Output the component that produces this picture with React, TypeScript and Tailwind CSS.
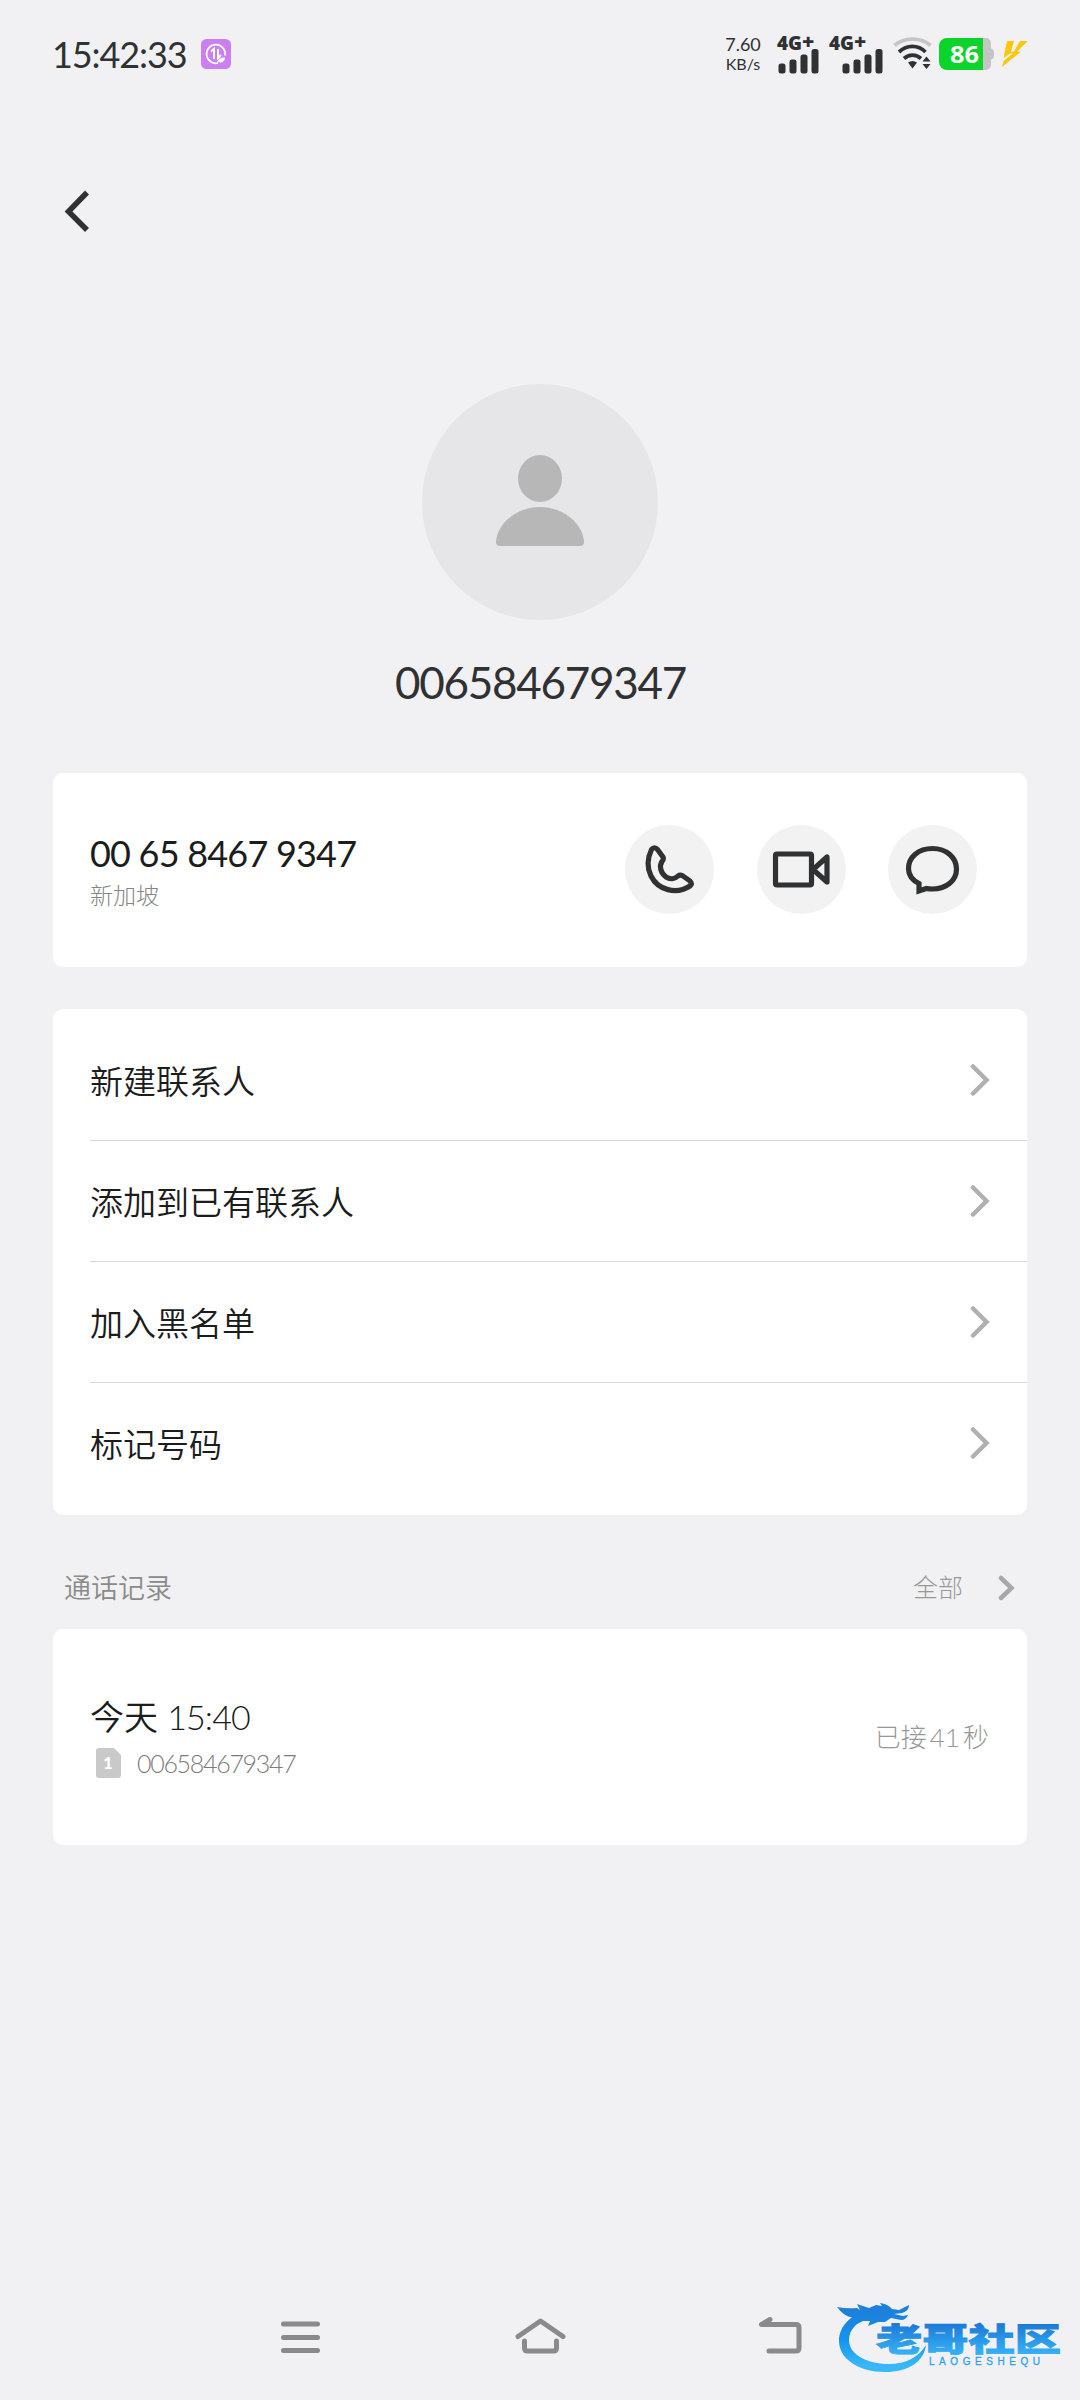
import type { ReactNode } from "react";

const actions = [
  { label: "新建联系人" },
  { label: "添加到已有联系人" },
  { label: "加入黑名单" },
  { label: "标记号码" },
];

function Signal({ offset = 0 }: { offset?: number }) {
  return (
    <svg className="overflow-visible" width="52" height="40" viewBox="0 0 52 40" fill="#303132">
      <text x="0" y="16" fontSize="18.500" fontWeight="800" fontFamily="Open Sans, sans-serif">
        <tspan textLength="25" lengthAdjust="spacingAndGlyphs">4G</tspan>
        <tspan dy="-1.500" fontSize="21">+</tspan>
      </text>
      <g transform={`translate(${offset} 0)`}>
        <rect x="1.500" y="29.500" width="7" height="10" rx="2.500" />
        <rect x="12.500" y="25.500" width="7" height="14" rx="2.500" />
        <rect x="23.500" y="20.500" width="7" height="19" rx="2.500" />
        <rect x="34.500" y="15" width="7" height="24.500" rx="2.500" />
      </g>
    </svg>
  );
}

function Wifi() {
  return (
    <svg width="40" height="36" viewBox="0 0 40 36" fill="none" strokeWidth="3.800" strokeLinecap="butt">
      <path d="M1.500 9.500C11 1 28 1 37.500 9.500" stroke="#c5c5c6" />
      <path d="M6 16C14 8.500 25 8.500 32.500 16" stroke="#303132" />
      <path d="M11 22.500C16 18 23 18 28 22.500" stroke="#303132" />
      <path d="M15 26.500q4.500-3 9 0l-4.500 6z" fill="#303132" />
      <path d="M33.500 20.500l4 5h-8zM33.500 33l4-5h-8z" fill="#303132" />
    </svg>
  );
}

function StatusBar() {
  return (
    <header className="flex h-[107px] items-center justify-between pl-[52px] pr-[52px] text-[#303132]">
      <div className="flex items-center">
        <span className="w-[149px] text-[36px] leading-none tracking-[-1.100px]">15:42:33</span>
        <svg width="30" height="30" viewBox="0 0 30 30" fill="none" stroke="#fff">
          <rect width="30" height="30" rx="5.500" fill="#cc7ff0" stroke="none" />
          <path d="M24 16.500A9.300 9.300 0 1 0 17 24" strokeWidth="1.700" />
          <path d="M10 12.500l3-2.500v10M17 10v9l3-3" strokeWidth="2" />
          <path d="M16.500 23c0-3 3-4.500 7.500-4.500 0 4-3.500 6-7.500 4.500z" fill="#fff" stroke="none" />
        </svg>
      </div>
      <div className="flex items-center">
        <div className="mr-4 w-[36px] text-center text-[18px] leading-[20px]">
          <div>7.60</div>
          <div className="text-[16px]">KB/s</div>
        </div>
        <Signal />
        <Signal offset={12} />
        <div className="ml-3"><Wifi /></div>
        <svg className="ml-[6px]" width="56" height="32" viewBox="0 0 56 32">
          <path d="M44 0h3a5 5 0 0 1 5 5v5.500q3 1 3 3.500v4q0 2.500-3 3.500V27a5 5 0 0 1-5 5h-3z" fill="#c5c5c6" />
          <path d="M8 0h36v32H8a8 8 0 0 1-8-8V8a8 8 0 0 1 8-8z" fill="#0bd42b" />
          <text x="11" y="24.500" fontSize="24" fontWeight="700" fontFamily="Open Sans, sans-serif" textLength="29" lengthAdjust="spacingAndGlyphs" fill="#fff">86</text>
        </svg>
        <svg className="ml-[7px]" width="26" height="28" viewBox="0 0 26 28" fill="#fdc70c">
          <path d="M5 1h7L9 12l3-.5L18 1h8L15 11.500l3.500.5L0 27 1.500 21 11 13.500H8L1.500 18z" />
        </svg>
      </div>
    </header>
  );
}

function Chevron({ className }: { className?: string }) {
  return (
    <svg className={className} viewBox="0 0 20 32" fill="none" stroke="#b0b0b1" strokeWidth="4.500" strokeLinecap="round" strokeLinejoin="miter">
      <path d="M3 2.500l13.500 13.500L3 29.500" />
    </svg>
  );
}

function RoundButton({ children }: { children: ReactNode }) {
  return (
    <button className="flex size-[89px] items-center justify-center rounded-full bg-[#f2f2f2]">
      <svg width="89" height="89" viewBox="0 0 89 89" fill="none" stroke="#303132" strokeWidth="5.200" strokeLinejoin="round">
        {children}
      </svg>
    </button>
  );
}

function Brand() {
  return (
    <svg width="226" height="80" viewBox="0 0 226 80">
      <defs>
        <linearGradient id="brand" x1="0" y1="0" x2="0" y2="80" gradientUnits="userSpaceOnUse">
          <stop offset="0.2" stopColor="#1c80dc" />
          <stop offset="0.55" stopColor="#1595ee" />
          <stop offset="0.85" stopColor="#38b8f8" />
        </linearGradient>
        <linearGradient id="brandText" x1="0" y1="-38" x2="0" y2="4" gradientUnits="userSpaceOnUse">
          <stop offset="0" stopColor="#1c78d6" />
          <stop offset="1" stopColor="#35b0f6" />
        </linearGradient>
      </defs>
      <g fill="url(#brand)">
        <path d="M32 13C14 17 2 29 2 44c0 18 20 31 46 31 23 0 39-10 41-27-7 12-20 19-37 19-23 0-40-10-40-24 0-11 9-19 22-24z" />
        <path d="M0 10q10 2 20 1l3 2-3-6 12 4 7-3 6 1-2-3q8 1 12 6l7 1 10-5q0 6-7 8l-8 1 9 2 5-1q-2 5-7 5l-10-2-6 4-7 0-10 4 2-5-7 0-6 3 2-6-9-1Q6 18 0 10z" />
        <text fontSize="45" fontWeight="900" fontFamily="Noto Sans CJK SC, sans-serif" textLength="185" lengthAdjust="spacingAndGlyphs" fill="url(#brandText)" stroke="url(#brandText)" strokeWidth="1.200" transform="translate(39 53.500) scale(1 0.720)">老哥社区</text>
        <text x="92" y="68" fontSize="10" fontFamily="Liberation Sans, sans-serif" textLength="111" stroke="#1f93ea" strokeWidth="0.300">LAOGESHEQU</text>
      </g>
    </svg>
  );
}

export default function App() {
  return (
    <div className="flex h-[2400px] w-[1080px] flex-col overflow-hidden bg-[#f1f1f3] font-['Lato','Noto_Sans_CJK_SC',sans-serif] text-[#1b1c1c]">
      <StatusBar />
      <div className="flex h-[207px] items-center px-[63px]">
        <svg width="28" height="44" viewBox="0 0 28 44" fill="none" stroke="#303132" strokeWidth="5.500">
          <path d="M24 3.500L5.500 22.500l18.500 18.500" />
        </svg>
      </div>

      <section className="mt-[70px] flex flex-col items-center">
        <svg width="236" height="236" viewBox="0 0 236 236" fill="#b7b7b8">
          <circle cx="118" cy="118" r="118" fill="#e6e6e8" />
          <ellipse cx="118" cy="94.500" rx="22" ry="23.500" />
          <path d="M118 123c24 0 43 17 44 35q0 4-4 4H78q-4 0-4-4c1-18 20-35 44-35z" />
        </svg>
        <h1 className="mt-[40px] h-[113px] pl-[1px] text-[44px] leading-[44px] tracking-[-1.250px] text-[#303132]">006584679347</h1>
      </section>

      <section className="mx-[53px] flex h-[194px] items-center justify-between rounded-[10px] bg-white pb-[2px] pl-[37px] pr-[50px]">
        <div className="pt-[8px]">
          <div className="text-[36px] leading-[40px] tracking-[-0.800px]">00 65 8467 9347</div>
          <div className="mt-1 text-[23px] font-light leading-[36px] text-[#858585]">新加坡</div>
        </div>
        <div className="flex gap-[42.500px]">
          <RoundButton>
            <path d="M26.500 24.500Q29.500 21 32.500 24.500L38 32Q39 34 37 36.500C34 41 35.500 48 41 52C45 54.500 50 54 53 51Q55 49.500 58 51L65 56Q67.500 58.500 65 61C51 70 33 65 26 51C21.500 42 22.500 33 26.500 24.500Z" />
          </RoundButton>
          <RoundButton>
            <rect x="18.500" y="29" width="36" height="31" rx="1.500" />
            <path d="M56 44.500L70 32v25z" />
          </RoundButton>
          <RoundButton>
            <path d="M44.500 23.500c14 0 24 9 24 20.500s-10 20-24 20q-3 0-6-.5L31 66v-7.500C24 55 20.500 50 20.500 43.500c0-11.500 10-20 24-20z" strokeLinejoin="miter" />
          </RoundButton>
        </div>
      </section>

      <section className="mx-[53px] mt-[42px] h-[506px] rounded-[10px] bg-white py-[11px] pl-[37px]">
        {actions.map((a, i) => (
          <div
            key={a.label}
            className={`flex h-[121px] items-center justify-between border-b pr-[37px] ${i < actions.length - 1 ? "border-[#d9d9da]" : "border-transparent"}`}
          >
            <span className="pt-[1px] text-[33px] font-[350] leading-[48px]">{a.label}</span>
            <Chevron className="h-[32px] w-[20px]" />
          </div>
        ))}
      </section>

      <div className="flex h-[114px] items-center justify-between pl-[64px] pr-[65px] pt-[32px] font-light">
        <h2 className="text-[27px] font-[350] leading-[40px] text-[#8a8a8b]">通话记录</h2>
        <div className="flex items-center text-[#989899]">
          <span className="mr-[35px] text-[25px]">全部</span>
          <svg width="17" height="26" viewBox="0 0 17 26" fill="none" stroke="#a8a8a9" strokeWidth="4.500" strokeLinecap="round">
            <path d="M3 3l10.500 10L3 23" />
          </svg>
        </div>
      </div>

      <section className="mx-[53px] flex h-[216px] items-center justify-between rounded-[10px] bg-white pl-[37px] pr-[38px] font-light">
        <div>
          <div className="text-[34px] font-[350] leading-[48px]">
            今天 <span className="tracking-[-0.900px]">15:40</span>
          </div>
          <div className="mt-1 flex items-center text-[#7c7c7c]">
            <svg className="ml-[6px] mr-[16px]" width="25" height="30" viewBox="0 0 25 30">
              <path d="M3 0h15l7 7v20q0 3-3 3H3q-3 0-3-3V3q0-3 3-3z" fill="#c9c9c9" />
              <text x="12" y="21" textAnchor="middle" fontSize="17" fontWeight="900" fontFamily="Lato, sans-serif" fill="#fff">1</text>
            </svg>
            <span className="text-[25px] leading-[36px] tracking-[-1.300px]">006584679347</span>
          </div>
        </div>
        <span className="text-[26px] text-[#989899] [word-spacing:-4px]">已接 41 秒</span>
      </section>

      <nav className="mt-auto flex h-[127px] items-center pl-[280px] pr-[17px]">
        <svg width="42" height="40" viewBox="0 0 42 40" stroke="#8a8a8b" strokeWidth="5" strokeLinecap="round">
          <path d="M3.500 7h34M3.500 20.500h34M3.500 33.500h34" />
        </svg>
        <svg className="ml-[192px]" width="52" height="40" viewBox="0 0 52 40" fill="none" stroke="#8a8a8b" strokeWidth="5" strokeLinecap="round" strokeLinejoin="round">
          <path d="M4 19.500L26.500 4 49 19.500M10.500 24v7q0 3 3 3h26q3 0 3-3v-7" />
        </svg>
        <svg className="ml-[191px]" width="46" height="40" viewBox="0 0 46 40" fill="none" stroke="#8a8a8b" strokeWidth="5" strokeLinecap="round" strokeLinejoin="round">
          <path d="M13 2.500L4.500 7.500h34.500q3 0 3 3v20.500q0 3-3 3H12" />
        </svg>
        <div className="ml-auto"><Brand /></div>
      </nav>
    </div>
  );
}
